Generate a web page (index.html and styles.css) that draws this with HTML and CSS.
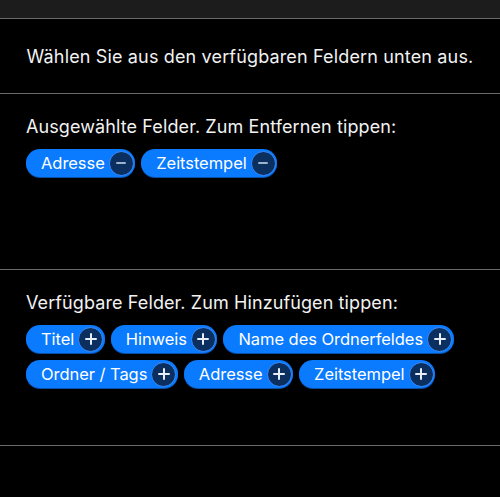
FILE: index.html
```html
<!DOCTYPE html>
<html>
<head>
<meta charset="utf-8">
<link rel="stylesheet" href="styles.css">
</head>
<body>
<div class="topbar"></div>
<div class="intro">Wählen Sie aus den verfügbaren Feldern unten aus.</div>
<section class="section">
  <div class="heading">Ausgewählte Felder. Zum Entfernen tippen:</div>
  <div class="chips">
    <span class="chip">Adresse<span class="btn minus"></span></span>
    <span class="chip">Zeitstempel<span class="btn minus"></span></span>
  </div>
</section>
<section class="section">
  <div class="heading">Verfügbare Felder. Zum Hinzufügen tippen:</div>
  <div class="chips">
    <span class="chip">Titel<span class="btn plus"></span></span>
    <span class="chip">Hinweis<span class="btn plus"></span></span>
    <span class="chip">Name des Ordnerfeldes<span class="btn plus"></span></span>
    <span class="chip">Ordner / Tags<span class="btn plus"></span></span>
    <span class="chip">Adresse<span class="btn plus"></span></span>
    <span class="chip">Zeitstempel<span class="btn plus"></span></span>
  </div>
</section>
</body>
</html>
```
FILE: styles.css
```css
html, body {
  margin: 0;
  padding: 0;
  background: #000;
  height: 100%;
}
body {
  font-family: Inter, "Noto Sans", sans-serif;
  color: #f2f2f2;
}
.topbar {
  height: 18px;
  background: #1c1c1c;
  border-bottom: 1.5px solid #6a6a6a;
}
.intro {
  height: 75px;
  box-sizing: border-box;
  padding-top: 27px;
  text-align: center;
  font-size: 18px;
  line-height: 22px;
  letter-spacing: 0.15px;
  border-bottom: 1.5px solid #6a6a6a;
}
.section {
  height: 176px;
  box-sizing: border-box;
  padding: 22px 26px 0;
  border-bottom: 1.5px solid #6a6a6a;
}
.heading {
  font-size: 18px;
  line-height: 22px;
  letter-spacing: 0.1px;
}
.chips {
  margin-top: 11px;
  display: flex;
  flex-wrap: wrap;
  gap: 7px 6px;
}
.chip {
  height: 28px;
  box-sizing: border-box;
  display: inline-flex;
  align-items: center;
  padding: 0 1.5px 0 15px;
  border-radius: 14px;
  background: #0a7aff;
  box-shadow: 0 1px 0 #0a4fa8;
  color: #fff;
  font-size: 16.5px;
  letter-spacing: -0.05px;
}
.btn {
  position: relative;
  width: 23px;
  height: 23px;
  margin-left: 4px;
  border-radius: 50%;
  background: #0b2f5f;
  border: 1px solid #3a8cff;
}
.btn::before, .btn::after {
  content: "";
  position: absolute;
  left: 50%;
  top: 50%;
  background: #e8eef7;
  border-radius: 1px;
}
.btn::before {
  width: 12px;
  height: 2px;
  margin: -1px 0 0 -6px;
}
.minus::before {
  width: 10px;
  height: 1.6px;
  margin: -0.8px 0 0 -5px;
  background: #9fb2cc;
}
.plus::after {
  width: 2px;
  height: 12px;
  margin: -6px 0 0 -1px;
}
```
